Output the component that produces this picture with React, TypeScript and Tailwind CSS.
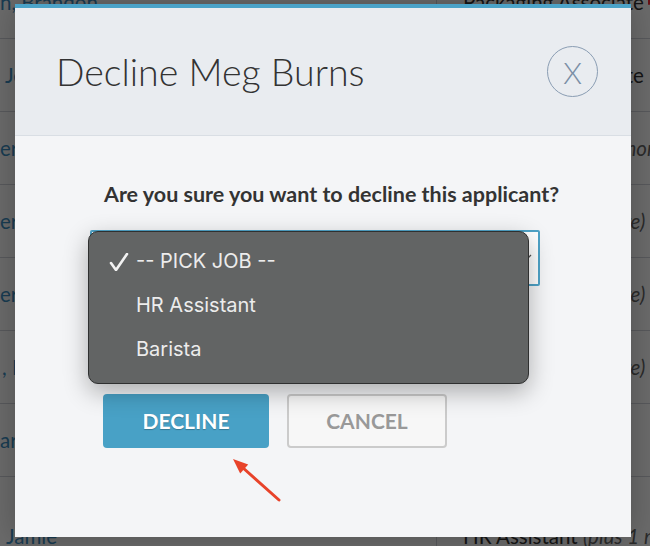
import React from "react";

const ROWS = [
  { name: "n, Brandon", pad: "pl-0", job: "Packaging Associate", italic: "" },
  { name: "Jessica", pad: "pl-[5px]", job: "Packaging Associate", italic: "" },
  { name: "er, Tom", pad: "pl-0", job: "Barista", italic: "(plus 2 more)", shift: "pl-[54px]" },
  { name: "er, Anna", pad: "pl-0", job: "Barista", italic: "(plus 1 more)", shift: "pl-[31px]" },
  { name: "er, Sam", pad: "pl-0", job: "Barista", italic: "(plus 1 more)", shift: "pl-[31px]" },
  { name: ", Nora", pad: "pl-[2px]", job: "Barista", italic: "(plus 1 more)", shift: "pl-[31px]" },
  { name: "ar, Luis", pad: "pl-0", job: "", italic: "" },
];

const JOBS = ["-- PICK JOB --", "HR Assistant", "Barista"];

export default function App() {
  return (
    <div className="relative w-[650px] h-[546px] overflow-hidden bg-white font-['Lato',sans-serif]">
      {/* Table behind the modal */}
      <div className="-mt-[34px]">
        {ROWS.map((r, i) => (
          <div key={i} className="flex h-[73px] border-b border-gray-300 text-[20.5px]">
            <div className={`w-[437px] shrink-0 border-r border-gray-300 flex items-center whitespace-nowrap overflow-hidden text-[#3d8fc4] ${r.pad}`}>
              {r.name}
            </div>
            <div className={`flex-1 flex items-center whitespace-nowrap overflow-hidden text-[#333] ${r.shift ?? "pl-[26px]"}`}>
              {r.job}
              {r.italic && <span className="ml-[6px] italic text-[#666]">{r.italic}</span>}
              {i === 0 && <span className="ml-[4px] w-[6px] h-[6px] rounded-full bg-red-500" />}
            </div>
          </div>
        ))}
        <div className="flex h-[90px] text-[20.5px]">
          <div className="w-[437px] shrink-0 border-r border-gray-300 pl-[6px] pt-[44px] whitespace-nowrap text-[#3d8fc4]">
            Jamie
          </div>
          <div className="flex-1 pl-[26px] pt-[44px] whitespace-nowrap overflow-hidden text-[#333]">
            HR Assistant <span className="italic text-[#666]">(plus 1 more)</span>
          </div>
        </div>
      </div>

      {/* Backdrop */}
      <div className="absolute inset-0 bg-black/[0.58]" />

      {/* Modal */}
      <div className="absolute left-[15px] top-[4px] w-[616px] h-[533px] flex flex-col bg-[#f4f5f7] border-t-4 border-[#4ba3c8] shadow-[0_0_30px_rgba(0,0,0,0.25)]">
        <div className="h-[128px] flex items-center justify-between pl-[41px] pr-[33px] bg-[#e9ecf0] border-b border-[#d9dee4]">
          <h2 className="text-[37.5px] font-light text-[#333] leading-none">Decline Meg Burns</h2>
          <button className="w-[51px] h-[51px] rounded-full border border-[#8a9db3] flex items-center justify-center text-[30px] font-light text-[#7b8fa6] leading-none">
            X
          </button>
        </div>

        <div className="relative flex-1 px-[75px] pt-[44px]">
          <p className="ml-[14px] text-center text-[21.5px] font-bold text-[#333] leading-[28px] whitespace-nowrap">
            Are you sure you want to decline this applicant?
          </p>

          <div className="relative mt-[22px] w-[450px] h-[56px] bg-white border-2 border-[#4fa3c7] rounded-[2px]">
            <svg className="absolute right-[6px] top-[20px] w-[10px] h-[10px]" viewBox="0 0 10 10">
              <path d="M1 3l4 4 4-4" fill="none" stroke="#555" strokeWidth="1.3" />
            </svg>

            {/* Native-style open menu */}
            <div className="absolute -left-[4px] -top-[1px] w-[441px] h-[153px] rounded-[10px] bg-[#626464] border border-[#2f3030] shadow-[0_8px_24px_rgba(0,0,0,0.3)] pt-[7px] font-['Inter',sans-serif] text-[20px] text-[#ececec]">
              {JOBS.map((j, i) => (
                <div key={j} className="relative h-[44px] flex items-center pl-[47px]">
                  {i === 0 && (
                    <svg className="absolute left-[20px] top-[14px] w-[20px] h-[18px]" viewBox="0 0 20 18">
                      <path d="M2 10l5 7L18 1" fill="none" stroke="#f2f2f2" strokeWidth="2.6" strokeLinecap="round" strokeLinejoin="round" />
                    </svg>
                  )}
                  {j}
                </div>
              ))}
            </div>
          </div>

          <div className="flex gap-[18px] mt-[108px] ml-[13px]">
            <button className="w-[166px] h-[54px] rounded-[4px] bg-[#48a1c6] text-white text-[21px] font-bold [text-shadow:0_1px_1px_rgba(0,0,0,0.25)]">
              DECLINE
            </button>
            <button className="w-[160px] h-[54px] rounded-[4px] border-2 border-[#cbcbcb] bg-[#f7f7f7] text-[#999] text-[21px] font-bold">
              CANCEL
            </button>
          </div>

          {/* Annotation arrow */}
          <svg className="absolute left-[195px] top-[313px] w-[80px] h-[60px]" viewBox="0 0 80 60">
            <line x1="32" y1="18" x2="69" y2="51" stroke="#e8432a" strokeWidth="3" strokeLinecap="round" />
            <path d="M23 10L30.2 24.5L38.2 15.5Z" fill="#e8432a" />
          </svg>
        </div>
      </div>
    </div>
  );
}
